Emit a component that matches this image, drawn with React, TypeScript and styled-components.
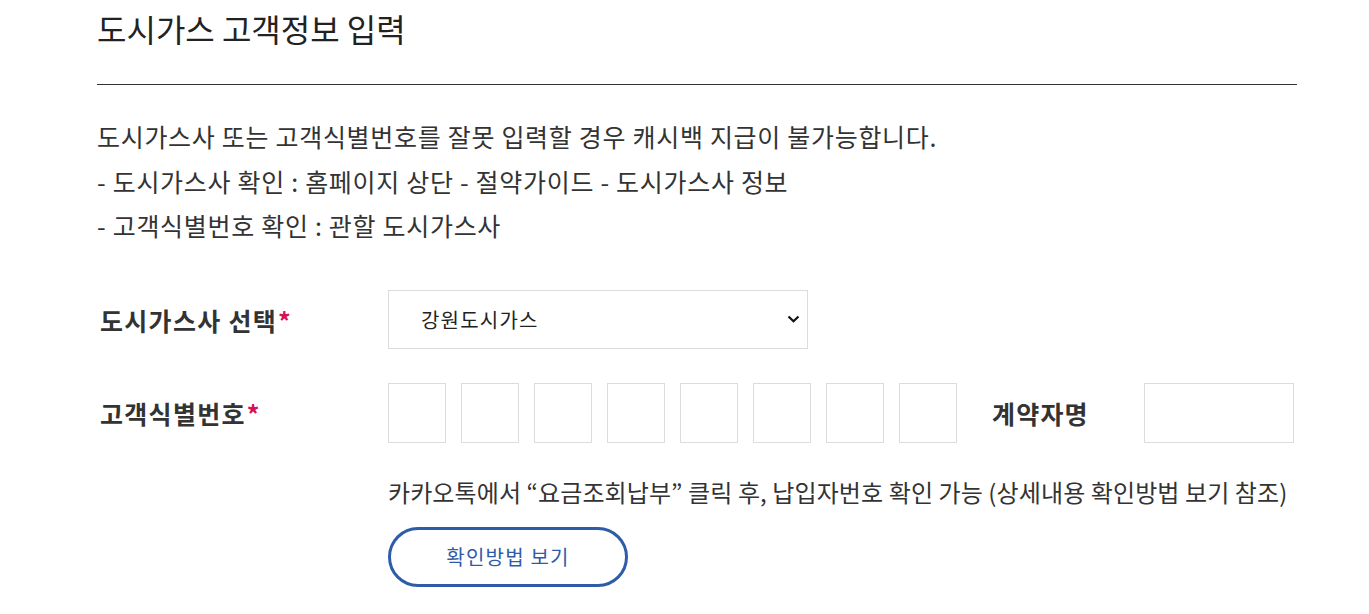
import React from "react";
import styled, { createGlobalStyle } from "styled-components";

const GlobalStyle = createGlobalStyle`
  html, body {
    margin: 0;
    padding: 0;
    background: #fff;
  }
  body {
    font-family: "Noto Sans CJK KR", "Noto Sans", sans-serif;
    color: #333;
  }
`;

const Page = styled.div`
  width: 1200px;
  padding-left: 97px;
  padding-top: 4px;
`;

const Header = styled.div`
  border-bottom: 1px solid #333;
  padding-bottom: 32px;
`;

const Title = styled.h2`
  margin: 0;
  font-size: 32px;
  font-weight: 400;
  line-height: 48px;
  color: #222;
`;

const Notice = styled.div`
  margin-top: 29px;
  font-size: 25px;
  line-height: 44.5px;
  color: #333;
  letter-spacing: 0.7px;
`;

const Form = styled.div`
  margin-top: 42px;
  display: flex;
  flex-direction: column;
  gap: 33px;
`;

const Row = styled.div`
  display: flex;
  align-items: flex-start;
`;

const Label = styled.div`
  flex: 0 0 291px;
  padding-left: 3px;
  box-sizing: border-box;
  font-size: 25px;
  font-weight: 700;
  color: #333;
  letter-spacing: 1.3px;
  height: 60px;
  display: flex;
  align-items: center;
`;

const Star = styled.span`
  color: #d6105a;
  margin-left: 1px;
`;

const SelectBox = styled.div`
  width: 420px;
  height: 59px;
  box-sizing: border-box;
  border: 1px solid #dcdcdc;
  display: flex;
  align-items: center;
  justify-content: space-between;
  padding: 0 7px 0 32px;
  font-size: 20px;
  color: #222;
  letter-spacing: 1.2px;
`;

const Field = styled.div`
  display: flex;
  flex-direction: column;
`;

const Digits = styled.div`
  display: flex;
  align-items: center;
  gap: 15px;
`;

const Box = styled.div<{ $w?: number }>`
  flex: 0 0 ${(p) => p.$w ?? 58}px;
  height: 60px;
  box-sizing: border-box;
  border: 1px solid #dcdcdc;
  background: #fff;
`;

const SideLabel = styled.div`
  flex: 0 0 157px;
  box-sizing: border-box;
  padding-left: 20px;
  font-size: 25px;
  font-weight: 700;
  color: #333;
  letter-spacing: 1.2px;
`;

const Hint = styled.div`
  margin-top: 27px;
  font-size: 24px;
  line-height: 44px;
  color: #333;
  letter-spacing: 0.1px;
  white-space: nowrap;
`;

const GuideButton = styled.button`
  margin-top: 13px;
  width: 240px;
  height: 60px;
  box-sizing: border-box;
  border: 3px solid #2f5ca9;
  border-radius: 30px;
  background: #fff;
  color: #2f5ca9;
  font-family: inherit;
  font-size: 20px;
  letter-spacing: 1.2px;
  cursor: pointer;
`;

const Chevron = () => (
  <svg width="13" height="8" viewBox="0 0 13 8">
    <path d="M1.5 1.5 L6.5 6.2 L11.5 1.5" fill="none" stroke="#111" strokeWidth="2.2" />
  </svg>
);

export default function App() {
  return (
    <Page>
      <GlobalStyle />
      <Header>
        <Title>도시가스 고객정보 입력</Title>
      </Header>
      <Notice>
        도시가스사 또는 고객식별번호를 잘못 입력할 경우 캐시백 지급이 불가능합니다.
        <br />- 도시가스사 확인 : 홈페이지 상단 - 절약가이드 - 도시가스사 정보
        <br />- 고객식별번호 확인 : 관할 도시가스사
      </Notice>
      <Form>
        <Row>
          <Label>
            도시가스사 선택<Star>*</Star>
          </Label>
          <SelectBox>
            <span>강원도시가스</span>
            <Chevron />
          </SelectBox>
        </Row>
        <Row>
          <Label>
            고객식별번호<Star>*</Star>
          </Label>
          <Field>
            <Digits>
              {Array.from({ length: 8 }).map((_, i) => (
                <Box key={i} />
              ))}
              <SideLabel>계약자명</SideLabel>
              <Box $w={150} />
            </Digits>
            <Hint>카카오톡에서 “요금조회납부” 클릭 후, 납입자번호 확인 가능 (상세내용 확인방법 보기 참조)</Hint>
            <div>
              <GuideButton>확인방법 보기</GuideButton>
            </div>
          </Field>
        </Row>
      </Form>
    </Page>
  );
}
